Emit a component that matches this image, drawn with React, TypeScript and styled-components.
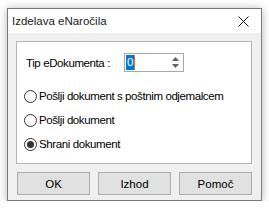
import React from 'react';
import styled, { createGlobalStyle } from 'styled-components';

const GlobalStyle = createGlobalStyle`
    *, *::before, *::after {
        box-sizing: border-box;
    }
    html, body {
        margin: 0;
        padding: 0;
        background: #ffffff;
    }
    body {
        font-family: "Liberation Sans", Arial, sans-serif;
        font-size: 11.5px;
        color: #000000;
        padding: 8px 0 0 7px;
    }
`;

const Window = styled.div`
    width: 255px;
    height: 193px;
    border: 1px solid #7a7a7a;
    background: #f0f0f0;
    display: flex;
    flex-direction: column;
    box-shadow: 0 0 8px rgba(0, 0, 0, 0.18), 0 2px 10px rgba(0, 0, 0, 0.12);
`;

const TitleBar = styled.div`
    height: 24px;
    flex-shrink: 0;
    background: #ffffff;
    display: flex;
    align-items: center;
    justify-content: space-between;
    padding: 0 12px 0 4px;
`;

const Title = styled.span`
    font-size: 11.5px;
    color: #1a1a1a;
    white-space: nowrap;
`;

const CloseButton = styled.span`
    display: flex;
    align-items: center;
    justify-content: center;
    width: 12px;
    height: 12px;
`;

const Body = styled.div`
    flex: 1;
    display: flex;
    flex-direction: column;
    padding: 8px 9px 0 8px;
`;

const GroupBox = styled.div`
    height: 123px;
    flex-shrink: 0;
    border: 1px solid #b4b4b4;
    background: #ffffff;
    display: flex;
    flex-direction: column;
    padding: 11px 0 0 7px;
`;

const FieldRow = styled.div`
    height: 19px;
    flex-shrink: 0;
    display: flex;
    align-items: center;
    margin-bottom: 12px;
`;

const FieldLabel = styled.span`
    width: 100px;
    padding-left: 2px;
    letter-spacing: -0.4px;
    white-space: nowrap;
`;

const Spinner = styled.div`
    width: 60px;
    height: 19px;
    border: 1px solid #a8a8a8;
    background: #ffffff;
    display: flex;
    align-items: center;
    justify-content: space-between;
    padding-left: 1px;
`;

const Selected = styled.span`
    background: #0078d7;
    color: #ffffff;
    line-height: 14px;
    height: 15px;
    padding: 0 1px;
    border-right: 1px solid #e0701c;
`;

const Arrows = styled.div`
    width: 15px;
    height: 17px;
    display: flex;
    flex-direction: column;
    align-items: center;
    justify-content: center;
    gap: 3px;
`;

const RadioRow = styled.label`
    height: 24px;
    flex-shrink: 0;
    display: flex;
    align-items: center;
    gap: 2px;
    letter-spacing: -0.4px;
    white-space: nowrap;
`;

const RadioCircle = styled.span<{ $checked?: boolean }>`
    width: 13px;
    height: 13px;
    border-radius: 50%;
    border: 1px solid #333333;
    background: #ffffff;
    display: flex;
    align-items: center;
    justify-content: center;
    flex-shrink: 0;

    &::after {
        content: '';
        width: 7px;
        height: 7px;
        border-radius: 50%;
        background: ${p => (p.$checked ? '#333333' : 'transparent')};
    }
`;

const ButtonRow = styled.div`
    display: flex;
    gap: 8px;
    padding: 8px 0 0 1px;
`;

const Button = styled.button`
    width: 73px;
    height: 23px;
    border: 1px solid #adadad;
    background: #e1e1e1;
    font-family: "Liberation Sans", Arial, sans-serif;
    font-size: 11.5px;
    color: #000000;
    padding: 0;
`;

const Arrow: React.FC<{ up?: boolean }> = ({ up }) => (
    <svg width="7" height="4" viewBox="0 0 7 4">
        {up ? <polygon points="0,4 7,4 3.5,0" fill="#606060" /> : <polygon points="0,0 7,0 3.5,4" fill="#606060" />}
    </svg>
);

const options = [
    { label: 'Pošlji dokument s poštnim odjemalcem', checked: false },
    { label: 'Pošlji dokument', checked: false },
    { label: 'Shrani dokument', checked: true },
];

const App: React.FC = () => {
    return (
        <>
            <GlobalStyle />
            <Window>
                <TitleBar>
                    <Title>Izdelava eNaročila</Title>
                    <CloseButton>
                        <svg width="11" height="11" viewBox="0 0 11 11">
                            <path d="M0.5 0.5 L10.5 10.5 M10.5 0.5 L0.5 10.5" stroke="#111111" strokeWidth="1" />
                        </svg>
                    </CloseButton>
                </TitleBar>
                <Body>
                    <GroupBox>
                        <FieldRow>
                            <FieldLabel>Tip eDokumenta :</FieldLabel>
                            <Spinner>
                                <Selected>0</Selected>
                                <Arrows>
                                    <Arrow up />
                                    <Arrow />
                                </Arrows>
                            </Spinner>
                        </FieldRow>
                        {options.map(o => (
                            <RadioRow key={o.label}>
                                <RadioCircle $checked={o.checked} />
                                {o.label}
                            </RadioRow>
                        ))}
                    </GroupBox>
                    <ButtonRow>
                        <Button>OK</Button>
                        <Button>Izhod</Button>
                        <Button>Pomoč</Button>
                    </ButtonRow>
                </Body>
            </Window>
        </>
    );
};

export default App;
